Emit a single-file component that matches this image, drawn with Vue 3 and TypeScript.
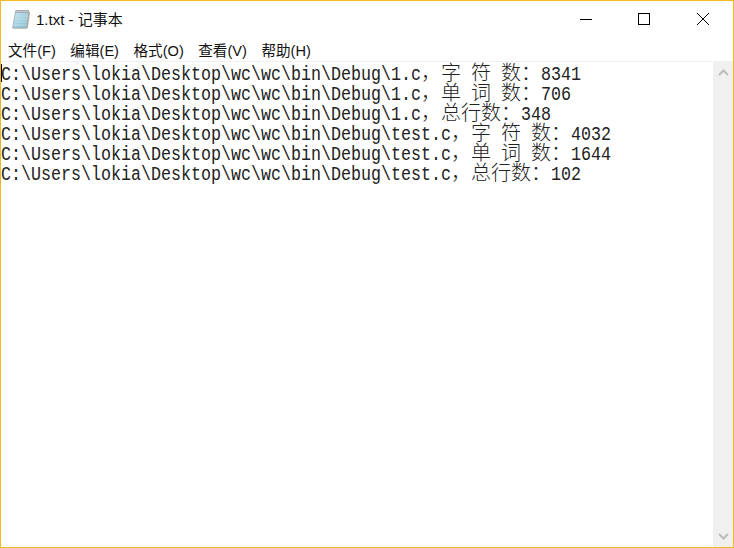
<script setup lang="ts">
const menus = ['文件(F)', '编辑(E)', '格式(O)', '查看(V)', '帮助(H)']
const lines = [
  'C:\\Users\\lokia\\Desktop\\wc\\wc\\bin\\Debug\\1.c，字 符 数：8341',
  'C:\\Users\\lokia\\Desktop\\wc\\wc\\bin\\Debug\\1.c，单 词 数：706',
  'C:\\Users\\lokia\\Desktop\\wc\\wc\\bin\\Debug\\1.c，总行数：348',
  'C:\\Users\\lokia\\Desktop\\wc\\wc\\bin\\Debug\\test.c，字 符 数：4032',
  'C:\\Users\\lokia\\Desktop\\wc\\wc\\bin\\Debug\\test.c，单 词 数：1644',
  'C:\\Users\\lokia\\Desktop\\wc\\wc\\bin\\Debug\\test.c，总行数：102',
]
const parts = lines.map((l) => l.match(/[\u3000-\u9fff\uff00-\uffef]+|[^\u3000-\u9fff\uff00-\uffef]+/g) ?? [])
const isCjk = (s: string) => /[\u3000-\u9fff\uff00-\uffef]/.test(s)
</script>

<template>
  <div class="window">
    <header class="titlebar">
      <svg class="app-icon" width="20" height="20" viewBox="0 0 20 20">
        <defs>
          <linearGradient id="pad" x1="0" y1="0" x2="1" y2="1">
            <stop offset="0" stop-color="#cfe8f0" />
            <stop offset="0.5" stop-color="#a3d0e0" />
            <stop offset="1" stop-color="#7fb8cd" />
          </linearGradient>
        </defs>
        <path d="M15.5 19 L18 3 L19.2 3.4 L16.8 19.6 L3 19.6 L1.6 19 Z" fill="#c9b48c" />
        <path d="M4.6 2.5 L18 2.5 L15.5 19 L1.6 19 Z" fill="url(#pad)" stroke="#93a8b0" stroke-width="0.8" />
        <path d="M4 7 L17 7 M3.6 10 L16.5 10 M3.2 13 L16 13 M2.8 16 L15.6 16" stroke="#c7e3ec" stroke-width="0.8" />
        <path d="M4.6 1 L18 1 L17.6 4 L4.2 4 Z" fill="#a4adb1" />
        <path d="M5.5 2.5 H17" stroke="#dfe5e7" stroke-width="1" stroke-dasharray="1 1" />
      </svg>
      <span class="title">1.txt - 记事本</span>
      <div class="controls">
        <button class="ctl">
          <svg class="min-glyph" width="12" height="12" viewBox="0 0 12 12"><path d="M0 6.5 H12" stroke="#000" stroke-width="1" /></svg>
        </button>
        <button class="ctl">
          <svg width="12" height="12" viewBox="0 0 12 12"><rect x="0.5" y="0.5" width="11" height="11" fill="none" stroke="#000" /></svg>
        </button>
        <button class="ctl">
          <svg width="12" height="12" viewBox="0 0 12 12"><path d="M0 0 L12 12 M12 0 L0 12" stroke="#000" stroke-width="1" /></svg>
        </button>
      </div>
    </header>
    <nav class="menubar">
      <span v-for="m in menus" :key="m" class="menu">{{ m }}</span>
    </nav>
    <main class="body">
      <div class="editor">
        <i class="caret"></i>
        <div v-for="(segs, i) in parts" :key="i" class="line">
          <template v-for="(s, j) in segs" :key="j">
            <span v-if="isCjk(s)" class="cjk">{{ s }}</span>
            <span v-else class="cell" :style="{ width: s.length * 10 + 'px' }"><span class="lat">{{ s }}</span></span>
          </template>
        </div>
      </div>
      <aside class="scrollbar">
        <svg width="11" height="7" viewBox="0 0 11 7"><path d="M1 6 L5.5 1.5 L10 6" fill="none" stroke="#bdbdbd" stroke-width="2" /></svg>
        <svg width="11" height="7" viewBox="0 0 11 7"><path d="M1 1 L5.5 5.5 L10 1" fill="none" stroke="#bdbdbd" stroke-width="2" /></svg>
      </aside>
    </main>
  </div>
</template>

<style>
html, body { margin: 0; background: #fff; }
</style>

<style scoped>
.window {
  width: 734px;
  height: 548px;
  box-sizing: border-box;
  border: 1px solid #f2b91f;
  background: #fff;
  display: flex;
  flex-direction: column;
  overflow: hidden;
  font-family: "Noto Sans CJK SC", "Liberation Sans", sans-serif;
}
.titlebar {
  height: 37px;
  display: flex;
  align-items: center;
  padding: 0 1px 2px 10px;
  box-sizing: border-box;
  flex: none;
}
.app-icon { margin-right: 5px; }
.title { font-family: "Liberation Sans", "Noto Sans CJK SC", sans-serif; font-size: 15px; color: #111; }
.controls { margin-left: auto; display: flex; }
.ctl {
  width: 59px;
  height: 35px;
  padding: 0;
  border: 0;
  background: none;
  display: flex;
  align-items: center;
  justify-content: center;
}
.min-glyph { margin-left: 2px; }
.menubar {
  height: 24px;
  display: flex;
  align-items: center;
  gap: 14.5px;
  padding-left: 7px;
  flex: none;
  border-bottom: 1px solid #f0f0f0;
  box-sizing: border-box;
}
.menu { font-family: "Liberation Sans", "Noto Sans CJK SC", sans-serif; font-size: 14.6px; color: #111; }
.body { flex: 1; display: flex; min-height: 0; }
.editor { flex: 1; box-sizing: border-box; position: relative; }
.caret {
  position: absolute;
  left: 0;
  top: 2px;
  width: 1px;
  height: 18px;
  background: #000;
}
.line {
  height: 20px;
  line-height: 20px;
  white-space: pre;
  color: #222;
  display: flex;
  align-items: baseline;
}
.cell { display: inline-block; }
.lat {
  display: inline-block;
  font-family: "Liberation Mono", monospace;
  font-size: 20px;
  transform: scaleX(0.8333);
  transform-origin: left center;
}
.cjk { font-family: "Noto Sans CJK SC", sans-serif; font-size: 20px; font-weight: 300; line-height: 20px; }
.scrollbar {
  width: 20px;
  background: #f0f0f0;
  display: flex;
  flex-direction: column;
  justify-content: space-between;
  align-items: center;
  padding: 7px 0;
  box-sizing: border-box;
}
</style>
